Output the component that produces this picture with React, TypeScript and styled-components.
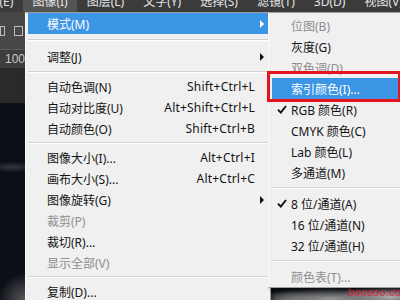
import React from "react";
import styled, { createGlobalStyle } from "styled-components";

const GlobalStyle = createGlobalStyle`
  html, body { margin: 0; padding: 0; background: #262626; }
  body { font-family: "Noto Sans", "Noto Sans CJK SC", sans-serif; }
`;

const Screen = styled.div`
  position: relative;
  width: 400px;
  height: 300px;
  overflow: hidden;
  display: flex;
  flex-direction: column;
  background: #262626;
  font-family: "Noto Sans", "Noto Sans CJK SC", sans-serif;
`;

const MenuBar = styled.div`
  flex: none;
  height: 12px;
  display: flex;
  overflow: hidden;
  background: #3b3b3b;
  margin-left: -34px;
`;

const BarItem = styled.div<{ $active?: boolean }>`
  padding: 0 9.5px;
  height: 12px;
  background: ${(p) => (p.$active ? "#545454" : "transparent")};
  color: #e4e4e4;
  font-size: 12px;
  line-height: 12px;
  white-space: nowrap;
  span { display: block; margin-top: -4px; }
`;

const OptionsBar = styled.div`
  flex: none;
  height: 37px;
  display: flex;
  align-items: center;
  gap: 9px;
  background: #474747;
  border-bottom: 1px solid #5c5c5c;
`;

const DocTab = styled.div`
  flex: none;
  height: 18px;
  background: #3d3d3d;
  color: #c9c9c9;
  font-size: 12px;
  line-height: 18px;
  padding-left: 5px;
  font-family: "Liberation Sans", sans-serif;
`;

const PanelGap = styled.div`
  flex: none;
  height: 35px;
  background: #2a2a2a;
`;

const Canvas = styled.div`
  position: relative;
  flex: 1;
  background:
    radial-gradient(ellipse 90px 14px at 330px 196px, #9a9a9a, rgba(120,120,120,0) 80%),
    radial-gradient(ellipse 60px 12px at 390px 194px, #b4b4b4, rgba(150,150,150,0) 90%),
    radial-gradient(ellipse 40px 10px at 290px 197px, #5a5a5a, rgba(80,80,80,0) 90%),
    radial-gradient(ellipse 30px 6px at 12px 64px, rgba(120,130,150,0.35), rgba(0,0,0,0) 90%),
    radial-gradient(ellipse 30px 30px at 25px 197px, rgba(140,140,140,0.6), rgba(0,0,0,0) 90%),
    #0c0f16;
`;

const Watermark = styled.div`
  position: absolute;
  left: 348px;
  top: 183px;
  color: #e0263f;
  font-family: "Liberation Sans", sans-serif;
  font-size: 11px;
  line-height: 12px;
  letter-spacing: 0.3px;
`;

const Dropdown = styled.div<{ $left: number; $top: number; $width: number; $height: number; $padLeft: number; $padTop: number }>`
  position: absolute;
  left: ${(p) => p.$left}px;
  top: ${(p) => p.$top}px;
  width: ${(p) => p.$width}px;
  height: ${(p) => p.$height}px;
  box-sizing: border-box;
  background: #f0f0f0;
  border: 1px solid #a0a0a0;
  border-left-color: #fbfbfb;
  box-shadow: 2px 2px 3px rgba(0, 0, 0, 0.35);
  padding: ${(p) => p.$padTop}px 2px 0 ${(p) => p.$padLeft}px;
  display: flex;
  flex-direction: column;
`;

const Row = styled.div<{ $active?: boolean; $disabled?: boolean }>`
  flex: none;
  height: 21px;
  display: flex;
  align-items: center;
  font-size: 12px;
  white-space: nowrap;
  background: ${(p) => (p.$active ? "#3d95e6" : "transparent")};
  color: ${(p) => (p.$active ? "#ffffff" : p.$disabled ? "#8e8e8e" : "#141414")};
`;

const IconSlot = styled.div`
  width: 19px;
  flex: none;
  display: flex;
  justify-content: center;
  align-items: center;
`;

const Label = styled.div`
  flex: 1;
`;

const Shortcut = styled.div`
  flex: none;
  letter-spacing: 0.2px;
`;

const ArrowSlot = styled.div`
  width: 13px;
  flex: none;
  display: flex;
  justify-content: center;
`;

const Arrow = styled.div<{ $light?: boolean }>`
  width: 0;
  height: 0;
  border-top: 4px solid transparent;
  border-bottom: 4px solid transparent;
  border-left: 4px solid ${(p) => (p.$light ? "#ffffff" : "#111111")};
`;

const Separator = styled.div<{ $h: number }>`
  flex: none;
  height: ${(p) => p.$h}px;
  display: flex;
  flex-direction: column;
  justify-content: center;
  &::before {
    content: "";
    display: block;
    height: 1px;
    background: #d2d2d2;
    border-bottom: 1px solid #ffffff;
  }
`;

const Annotation = styled.div`
  position: absolute;
  left: 267px;
  top: 71px;
  width: 134px;
  height: 31px;
  box-sizing: border-box;
  border: 3px solid #e3151e;
`;

const Check = () => (
  <svg width="10" height="9" viewBox="0 0 10 9">
    <path d="M1 4.6 L3.8 7.6 L9 1" fill="none" stroke="#111" strokeWidth="1.9" />
  </svg>
);

const ToolIcon = styled.div<{ $w: number }>`
  width: ${(p) => p.$w}px;
  height: 10px;
  border: 1px solid #bdbdbd;
  box-sizing: border-box;
`;

type Item =
  | { sep: number }
  | { label: string; shortcut?: string; sub?: boolean; active?: boolean; disabled?: boolean; check?: boolean };

const mainItems: Item[] = [
  { label: "模式(M)", sub: true, active: true },
  { sep: 12 },
  { label: "调整(J)", sub: true },
  { sep: 9 },
  { label: "自动色调(N)", shortcut: "Shift+Ctrl+L" },
  { label: "自动对比度(U)", shortcut: "Alt+Shift+Ctrl+L" },
  { label: "自动颜色(O)", shortcut: "Shift+Ctrl+B" },
  { sep: 8 },
  { label: "图像大小(I)...", shortcut: "Alt+Ctrl+I" },
  { label: "画布大小(S)...", shortcut: "Alt+Ctrl+C" },
  { label: "图像旋转(G)", sub: true },
  { label: "裁剪(P)", disabled: true },
  { label: "裁切(R)..." },
  { label: "显示全部(V)", disabled: true },
  { sep: 8 },
  { label: "复制(D)..." },
];

const subItems: Item[] = [
  { label: "位图(B)", disabled: true },
  { label: "灰度(G)" },
  { label: "双色调(D)", disabled: true },
  { label: "索引颜色(I)...", active: true },
  { label: "RGB 颜色(R)", check: true },
  { label: "CMYK 颜色(C)" },
  { label: "Lab 颜色(L)" },
  { label: "多通道(M)" },
  { sep: 10 },
  { label: "8 位/通道(A)", check: true },
  { label: "16 位/通道(N)" },
  { label: "32 位/通道(H)" },
  { sep: 10 },
  { label: "颜色表(T)...", disabled: true },
];

const renderItems = (items: Item[], withRight: boolean) =>
  items.map((it, i) => {
    if ("sep" in it) return <Separator key={i} $h={it.sep} />;
    return (
      <Row key={i} $active={it.active} $disabled={it.disabled}>
        <IconSlot>{it.check && <Check />}</IconSlot>
        <Label>{it.label}</Label>
        {it.shortcut && <Shortcut>{it.shortcut}</Shortcut>}
        {withRight && <ArrowSlot>{it.sub && <Arrow $light={it.active} />}</ArrowSlot>}
      </Row>
    );
  });

const menuNames = ["编辑(E)", "图像(I)", "图层(L)", "文字(Y)", "选择(S)", "滤镜(T)", "3D(D)", "视图(V)"];

export default function App() {
  return (
    <Screen>
      <GlobalStyle />
      <MenuBar>
        {menuNames.map((n) => (
          <BarItem key={n} $active={n === "图像(I)"}>
            <span>{n}</span>
          </BarItem>
        ))}
      </MenuBar>
      <OptionsBar>
        <ToolIcon $w={5} />
        <ToolIcon $w={9} />
      </OptionsBar>
      <DocTab>100</DocTab>
      <PanelGap />
      <Canvas>
        <Watermark>boosoo.com</Watermark>
      </Canvas>

      <Dropdown $left={25} $top={12} $width={246} $height={300} $padLeft={2} $padTop={0}>
        {renderItems(mainItems, true)}
      </Dropdown>

      <Dropdown $left={268} $top={12} $width={134} $height={276} $padLeft={3} $padTop={2}>
        {renderItems(subItems, false)}
      </Dropdown>

      <Annotation />
    </Screen>
  );
}
